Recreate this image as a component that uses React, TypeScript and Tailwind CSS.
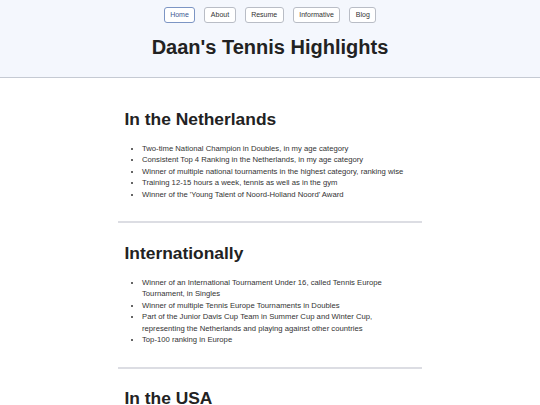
import React from "react";

const navItems = ["Home", "About", "Resume", "Informative", "Blog"];

const sections: { title: string; items: string[] }[] = [
  {
    title: "In the Netherlands",
    items: [
      "Two-time National Champion in Doubles, in my age category",
      "Consistent Top 4 Ranking in the Netherlands, in my age category",
      "Winner of multiple national tournaments in the highest category, ranking wise",
      "Training 12-15 hours a week, tennis as well as in the gym",
      "Winner of the 'Young Talent of Noord-Holland Noord' Award",
    ],
  },
  {
    title: "Internationally",
    items: [
      "Winner of an International Tournament Under 16, called Tennis Europe Tournament, in Singles",
      "Winner of multiple Tennis Europe Tournaments in Doubles",
      "Part of the Junior Davis Cup Team in Summer Cup and Winter Cup, representing the Netherlands and playing against other countries",
      "Top-100 ranking in Europe",
    ],
  },
  {
    title: "In the USA",
    items: [],
  },
];

export default function App() {
  return (
    <div className="min-h-screen bg-white text-[#222]" style={{ fontFamily: '"Liberation Sans", Arial, sans-serif' }}>
      <header className="h-[78px] bg-[#f4f7fd] border-b border-[#c5cad3] pt-[7px]">
        <nav className="flex justify-center gap-[9px]">
          {navItems.map((item, i) => (
            <button
              key={item}
              type="button"
              className={`h-[15.5px] px-[5.5px] rounded-[3px] bg-white text-[7px] leading-none border ${
                i === 0 ? "border-[#7c95c4] text-[#3c5a94]" : "border-[#b9bdc6] text-[#333]"
              }`}
            >
              {item}
            </button>
          ))}
        </nav>
        <h1 className="mt-[12px] text-center text-[20px] font-bold leading-[24px] text-[#222]">
          Daan's Tennis Highlights
        </h1>
      </header>

      <main className="w-[304px] mx-auto pt-[31px]">
        {sections.map((section, idx) => (
          <section key={section.title}>
            {idx > 0 ? <hr className="border-0 border-t-[2px] border-[#dcdde3] mb-[19.5px]" /> : null}
            <h2 className="pl-[6.5px] text-[17.4px] font-bold leading-[20px] text-[#222]">{section.title}</h2>
            {section.items.length > 0 ? (
              <ul
                className={`list-disc pl-[24px] pr-[16px] mb-[21px] text-[7.7px] leading-[11.5px] text-[#333] ${
                  idx === 0 ? "mt-[13.6px]" : "mt-[14.3px]"
                }`}
              >
                {section.items.map((item) => (
                  <li key={item}>{item}</li>
                ))}
              </ul>
            ) : null}
          </section>
        ))}
      </main>
    </div>
  );
}
